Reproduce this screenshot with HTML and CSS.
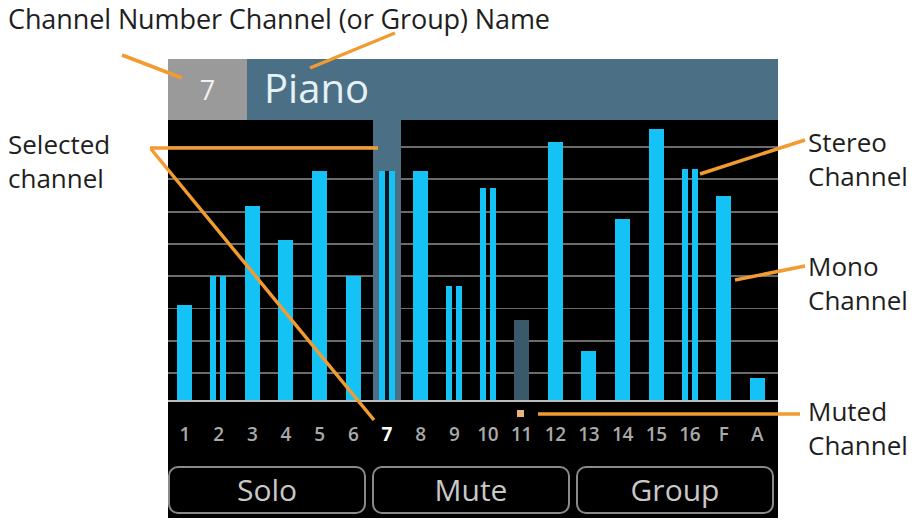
FILE: index.html
```html
<!DOCTYPE html>
<html lang="en">
<head>
  <meta charset="UTF-8" />
  <title>Meter View</title>
  <link rel="stylesheet" href="styles.css">
</head>
<body>
  <div class="figure">
    <p class="note note-top">Channel Number Channel (or Group) Name</p>
    <p class="note note-selected">Selected<br>channel</p>
    <p class="note note-stereo">Stereo<br>Channel</p>
    <p class="note note-mono">Mono<br>Channel</p>
    <p class="note note-muted">Muted<br>Channel</p>

    <div class="screen">
      <div class="screen-head">
        <span class="ch-num">7</span>
        <span class="ch-name">Piano</span>
      </div>

      <div class="meters">
        <div class="strip"><div class="bar" style="height:95px"></div></div>
        <div class="strip"><div class="bar stereo" style="height:124px"><i></i><i></i></div></div>
        <div class="strip"><div class="bar" style="height:194px"></div></div>
        <div class="strip"><div class="bar" style="height:160px"></div></div>
        <div class="strip"><div class="bar" style="height:229px"></div></div>
        <div class="strip"><div class="bar" style="height:124px"></div></div>
        <div class="strip selected"><div class="bar stereo" style="height:229px"><i></i><i></i></div></div>
        <div class="strip"><div class="bar" style="height:229px"></div></div>
        <div class="strip"><div class="bar stereo" style="height:114px"><i></i><i></i></div></div>
        <div class="strip"><div class="bar stereo" style="height:212px"><i></i><i></i></div></div>
        <div class="strip"><div class="bar muted" style="height:80px"></div></div>
        <div class="strip"><div class="bar" style="height:258px"></div></div>
        <div class="strip"><div class="bar" style="height:49px"></div></div>
        <div class="strip"><div class="bar" style="height:181px"></div></div>
        <div class="strip"><div class="bar" style="height:271px"></div></div>
        <div class="strip"><div class="bar stereo" style="height:231px"><i></i><i></i></div></div>
        <div class="strip"><div class="bar" style="height:204px"></div></div>
        <div class="strip"><div class="bar" style="height:22px"></div></div>
      </div>

      <div class="labels">
        <span>1</span><span>2</span><span>3</span><span>4</span><span>5</span><span>6</span>
        <span class="current">7</span><span>8</span><span>9</span><span>10</span>
        <span class="is-muted">11</span><span>12</span><span>13</span><span>14</span>
        <span>15</span><span>16</span><span>F</span><span>A</span>
      </div>

      <div class="buttons">
        <button class="soft-btn">Solo</button>
        <button class="soft-btn">Mute</button>
        <button class="soft-btn">Group</button>
      </div>
    </div>

    <!-- callout leader lines -->
    <svg class="leaders" width="920" height="520" viewBox="0 0 920 520">
      <line x1="122" y1="55" x2="182" y2="78" />
      <line x1="395" y1="33" x2="310" y2="68" />
      <line x1="150" y1="148" x2="378" y2="148" />
      <line x1="151" y1="149" x2="374" y2="420" />
      <line x1="700" y1="174" x2="805" y2="140" />
      <line x1="735" y1="280" x2="805" y2="266" />
      <line x1="538" y1="414" x2="800" y2="414" />
    </svg>
  </div>
</body>
</html>
```

FILE: styles.css
```css
body {
  margin: 0;
  background: #fff;
  font-family: "Open Sans", "Noto Sans", sans-serif;
}
.figure {
  position: relative;
  width: 920px;
  height: 520px;
  padding: 59px 0 0 168px;
  box-sizing: border-box;
  overflow: hidden;
}

/* callout text */
.note {
  position: absolute;
  margin: 0;
  font-size: 26px;
  line-height: 34px;
  color: #1e1e1e;
}
.note-top { left: 8px; top: 2px; font-size: 27px; letter-spacing: -0.1px; }
.note-selected { left: 8px; top: 127px; }
.note-stereo { left: 808px; top: 125px; }
.note-mono { left: 808px; top: 249px; }
.note-muted { left: 808px; top: 394px; }

.leaders {
  position: absolute;
  left: 0;
  top: 0;
  pointer-events: none;
}
.leaders line {
  stroke: #f29b30;
  stroke-width: 3.5;
}

/* device screen */
.screen {
  width: 610px;
  background: #000;
  padding-bottom: 4px;
}
.screen-head {
  display: flex;
  height: 61px;
  background: #4b6f84;
}
.ch-num {
  width: 79px;
  background: #9a9a9a;
  color: #f2f2f2;
  font-size: 27px;
  line-height: 61px;
  text-align: center;
}
.ch-name {
  padding-left: 17px;
  color: #e4f2f8;
  font-size: 40px;
  line-height: 58px;
}

.meters {
  display: grid;
  grid-template-columns: repeat(18, 1fr);
  height: 280px;
  padding-right: 4px;
  border-bottom: 2px solid #bdbdbd;
  background: repeating-linear-gradient(to bottom,
    transparent 0, transparent 26px,
    #6b6b6b 26px, #6b6b6b 28px,
    transparent 28px, transparent 32.3px);
}
.strip {
  display: flex;
  justify-content: center;
  align-items: flex-end;
}
.strip.selected {
  background: linear-gradient(to right,
    transparent calc(50% - 14px), #4b6f84 calc(50% - 14px),
    #4b6f84 calc(50% + 14px), transparent calc(50% + 14px));
}
.bar {
  width: 15px;
  background: #15c2f6;
}
.bar.muted { background: #3a5a6c; }
.bar.stereo {
  display: flex;
  justify-content: space-between;
  width: 16px;
  background: none;
}
.bar.stereo i {
  width: 6px;
  background: #15c2f6;
}
.selected .bar.stereo { background: #07131b; }

.labels {
  display: grid;
  grid-template-columns: repeat(18, 1fr);
  height: 64px;
  padding-right: 4px;
  align-items: center;
  text-align: center;
  font-size: 19px;
  font-weight: 600;
  color: #a9a9a9;
  letter-spacing: -0.4px;
}
.labels .current {
  color: #fff;
  font-weight: 700;
}
.labels .is-muted { position: relative; }
.labels .is-muted::before {
  content: "";
  position: absolute;
  left: 50%;
  top: -11px;
  width: 7px;
  height: 7px;
  margin-left: -4px;
  background: #e6b47c;
}

.buttons {
  display: grid;
  grid-template-columns: repeat(3, 198px);
  gap: 6px;
}
.soft-btn {
  height: 48px;
  padding: 0;
  border: 2px solid #8a8a8a;
  border-radius: 10px;
  background: #000;
  color: #c8c8c8;
  font-family: inherit;
  font-size: 30px;
  line-height: 40px;
}
```
